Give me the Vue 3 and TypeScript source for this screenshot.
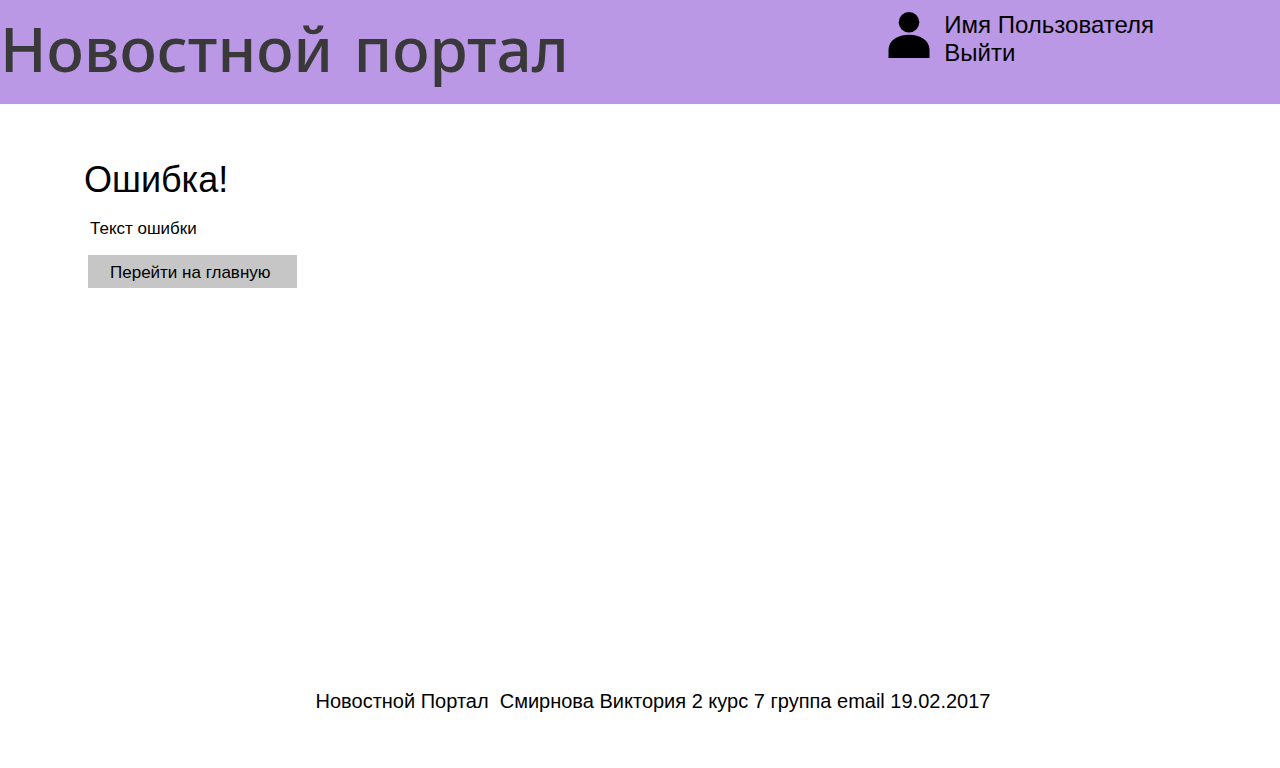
<script setup lang="ts">
const siteName: string = 'Новостной портал'
const userName: string = 'Имя Пользователя'
const errorText: string = 'Текст ошибки'
const footerText: string = 'Новостной Портал\u00a0 Смирнова Виктория 2 курс 7 группа email 19.02.2017'
</script>

<template>
  <div class="page">
    <header class="header">
      <div class="brand">{{ siteName }}</div>
      <div class="user">
        <svg class="avatar" viewBox="0 0 42 47" aria-hidden="true">
          <circle cx="21" cy="11.2" r="10.3" />
          <path d="M.5 47V39C.5 29 10 23.7 21 23.7S41.5 29 41.5 39V47Z" />
        </svg>
        <div class="account">
          <span>{{ userName }}</span>
          <a href="#logout">Выйти</a>
        </div>
      </div>
    </header>
    <main class="content">
      <h1>Ошибка!</h1>
      <p>{{ errorText }}</p>
      <button type="button">Перейти на главную</button>
    </main>
    <footer class="footer">{{ footerText }}</footer>
  </div>
</template>

<style>
body {
  margin: 0;
  background: #fff;
}
</style>

<style scoped>
.page {
  display: flex;
  flex-direction: column;
  min-height: 100vh;
  color: #000;
  font-family: "Liberation Sans", Arial, sans-serif;
}

.header {
  display: flex;
  justify-content: space-between;
  align-items: flex-start;
  padding-right: 126px;
  background: #ba98e5;
}

.brand {
  color: #393939;
  font-family: "Comic Sans MS", "Comic Neue", "Noto Sans", sans-serif;
  font-size: 62px;
  font-weight: 500;
  line-height: 104px;
  white-space: nowrap;
}

.user {
  display: flex;
  gap: 14px;
  padding-top: 11px;
}

.avatar {
  width: 42px;
  height: 47px;
}

.account {
  display: flex;
  flex-direction: column;
  align-items: flex-start;
  font-size: 24px;
  line-height: 28px;
  white-space: nowrap;
}

.account a {
  color: inherit;
  text-decoration: none;
}

.content {
  flex: 1;
  padding: 56px 84px;
}

h1 {
  margin: 0;
  font-size: 36px;
  font-weight: 400;
  line-height: 40px;
}

p {
  margin: 19px 6px 16px;
  font-size: 17px;
  line-height: 20px;
}

button {
  display: block;
  margin-left: 4px;
  padding: 8px 26px 5px 22px;
  border: 0;
  background: #c6c6c6;
  color: #000;
  font-family: inherit;
  font-size: 17px;
  line-height: 20px;
  cursor: pointer;
}

.footer {
  padding: 0 0 55px 26px;
  font-size: 20px;
  line-height: 24px;
  text-align: center;
}
</style>
